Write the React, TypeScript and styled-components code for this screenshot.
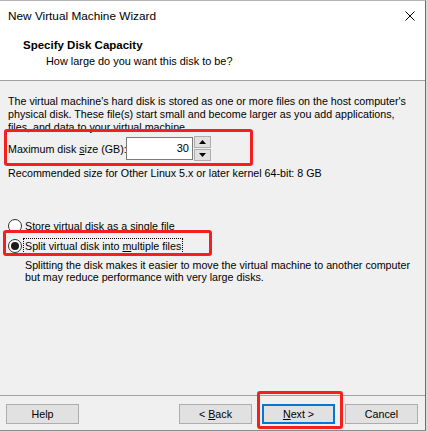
import styled, { createGlobalStyle } from "styled-components";

const GlobalStyle = createGlobalStyle`
  html, body {
    margin: 0;
    padding: 0;
    background: #d9d9d9;
  }
  body {
    font-family: "Liberation Sans", Arial, sans-serif;
    font-size: 10.7px;
    color: #000;
  }
`;

export default function App() {
  return (
    <>
      <GlobalStyle />
      <Window>
        {/* title bar */}
        <TitleBar>
          <TitleText>New Virtual Machine Wizard</TitleText>
          <CloseButton>
            <svg width="10" height="10" viewBox="0 0 10 10">
              <path d="M0.5 0.5 L9.5 9.5 M9.5 0.5 L0.5 9.5" stroke="#000" strokeWidth="1" />
            </svg>
          </CloseButton>
        </TitleBar>

        {/* page header */}
        <Header>
          <HeaderTitle>Specify Disk Capacity</HeaderTitle>
          <HeaderSub>How large do you want this disk to be?</HeaderSub>
        </Header>

        {/* body */}
        <Body>
          <Paragraph>
            The virtual machine's hard disk is stored as one or more files on the host computer's
            physical disk. These file(s) start small and become larger as you add applications,
            files, and data to your virtual machine.
          </Paragraph>

          <SizeRow>
            <Label>
              Maximum disk <u>s</u>ize (GB):
            </Label>
            <SizeInput>30</SizeInput>
            <Spinner>
              <SpinButton>
                <svg width="7" height="4" viewBox="0 0 7 4">
                  <path d="M0 4 L3.5 0 L7 4 Z" fill="#000" />
                </svg>
              </SpinButton>
              <SpinButton>
                <svg width="7" height="4" viewBox="0 0 7 4">
                  <path d="M0 0 L7 0 L3.5 4 Z" fill="#000" />
                </svg>
              </SpinButton>
            </Spinner>
            <Highlight $top={-7} $left={-4} $width={249} $height={37} />
          </SizeRow>

          <Recommended>Recommended size for Other Linux 5.x or later kernel 64-bit: 8 GB</Recommended>

          <RadioGroup>
            <RadioRow>
              <RadioCircle />
              <RadioLabel>Store virtual disk as a single file</RadioLabel>
            </RadioRow>
            <RadioRow>
              <RadioCircle $checked />
              <RadioLabel $focused>
                Split virtual disk into <u>m</u>ultiple files
              </RadioLabel>
              <Highlight $top={-6} $left={-5} $width={209} $height={26} />
            </RadioRow>
            <RadioHint>
              Splitting the disk makes it easier to move the virtual machine to another computer
              <br />
              but may reduce performance with very large disks.
            </RadioHint>
          </RadioGroup>
        </Body>

        {/* footer buttons */}
        <Footer>
          <Button>Help</Button>
          <ButtonGroup>
            <Button>
              &lt; <u>B</u>ack
            </Button>
            <NextWrap>
              <Button $primary>
                <u>N</u>ext &gt;
              </Button>
              <Highlight $top={-13} $left={-5} $width={86} $height={38} />
            </NextWrap>
            <Button>Cancel</Button>
          </ButtonGroup>
        </Footer>
      </Window>
    </>
  );
}

const Window = styled.div`
  width: 425px;
  height: 429px;
  background: #f0f0f0;
  border-top: 1px solid #b5b5b5;
  border-right: 1px solid #6f6f6f;
  border-bottom: 1px solid #8a8a8a;
  display: flex;
  flex-direction: column;
  overflow: hidden;
`;

const TitleBar = styled.div`
  height: 29px;
  background: #fff;
  display: flex;
  align-items: center;
  justify-content: space-between;
  padding: 0 0 0 8px;
`;

const TitleText = styled.div`
  font-size: 11.8px;
`;

const CloseButton = styled.div`
  width: 30px;
  height: 29px;
  display: flex;
  align-items: center;
  justify-content: center;
`;

const Header = styled.div`
  height: 51px;
  background: #fff;
  border-bottom: 1px solid #a0a0a0;
  padding: 8px 0 0 23px;
  box-sizing: border-box;
`;

const HeaderTitle = styled.div`
  font-weight: 700;
  font-size: 11.5px;
  line-height: 15px;
`;

const HeaderSub = styled.div`
  font-size: 10.9px;
  line-height: 16px;
  padding-left: 23px;
`;

const Body = styled.div`
  flex: 1;
  padding: 14px 8px 0 8px;
  display: flex;
  flex-direction: column;
`;

const Paragraph = styled.div`
  width: 404px;
  line-height: 13px;
  height: 39px;
  overflow: hidden;
`;

const SizeRow = styled.div`
  position: relative;
  display: flex;
  align-items: center;
  margin-top: 2px;
  height: 25px;
`;

const Label = styled.div`
  width: 118px;
  white-space: nowrap;
`;

const SizeInput = styled.div`
  width: 62px;
  height: 21px;
  background: #fff;
  border: 1px solid #7a7a7a;
  padding-right: 3px;
  text-align: right;
  line-height: 21px;
  font-size: 11px;
`;

const Spinner = styled.div`
  display: flex;
  flex-direction: column;
  margin-left: 1px;
  height: 25px;
`;

const SpinButton = styled.div`
  width: 15px;
  height: 11px;
  border: 1px solid #adadad;
  background: #e1e1e1;
  display: flex;
  align-items: center;
  justify-content: center;
  & + & {
    margin-top: 1px;
  }
`;

const Highlight = styled.div<{ $top: number; $left: number; $width: number; $height: number }>`
  position: absolute;
  top: ${(p) => p.$top}px;
  left: ${(p) => p.$left}px;
  width: ${(p) => p.$width}px;
  height: ${(p) => p.$height}px;
  border: 3px solid #f5201e;
  border-radius: 3px;
  box-sizing: border-box;
  pointer-events: none;
`;

const Recommended = styled.div`
  margin-top: 6px;
  line-height: 13px;
`;

const RadioGroup = styled.div`
  margin-top: 36px;
  display: flex;
  flex-direction: column;
`;

const RadioRow = styled.div`
  position: relative;
  display: flex;
  align-items: center;
  height: 20px;
`;

const RadioCircle = styled.div<{ $checked?: boolean }>`
  width: 14px;
  height: 14px;
  border-radius: 50%;
  border: 1px solid #333;
  background: #fff;
  box-sizing: border-box;
  display: flex;
  align-items: center;
  justify-content: center;
  margin-right: 1px;
  &::after {
    content: "";
    display: ${(p) => (p.$checked ? "block" : "none")};
    width: 8px;
    height: 8px;
    border-radius: 50%;
    background: #1b1b1b;
  }
`;

const RadioLabel = styled.div<{ $focused?: boolean }>`
  padding: 0 1px;
  line-height: 14px;
  border: 1px dotted ${(p) => (p.$focused ? "#000" : "transparent")};
`;

const RadioHint = styled.div`
  margin-top: 3px;
  padding-left: 17px;
  line-height: 12px;
`;

const Footer = styled.div`
  height: 35px;
  border-top: 1px solid #a0a0a0;
  display: flex;
  align-items: flex-start;
  justify-content: space-between;
  padding: 8px 7px 0 6px;
  box-sizing: border-box;
`;

const ButtonGroup = styled.div`
  display: flex;
  gap: 10px;
`;

const NextWrap = styled.div`
  position: relative;
`;

const Button = styled.div<{ $primary?: boolean }>`
  width: 73px;
  height: 20px;
  box-sizing: border-box;
  background: #e1e1e1;
  border: ${(p) => (p.$primary ? "2px solid #0078d7" : "1px solid #adadad")};
  text-align: center;
  line-height: ${(p) => (p.$primary ? "16px" : "18px")};
  white-space: pre;
`;
